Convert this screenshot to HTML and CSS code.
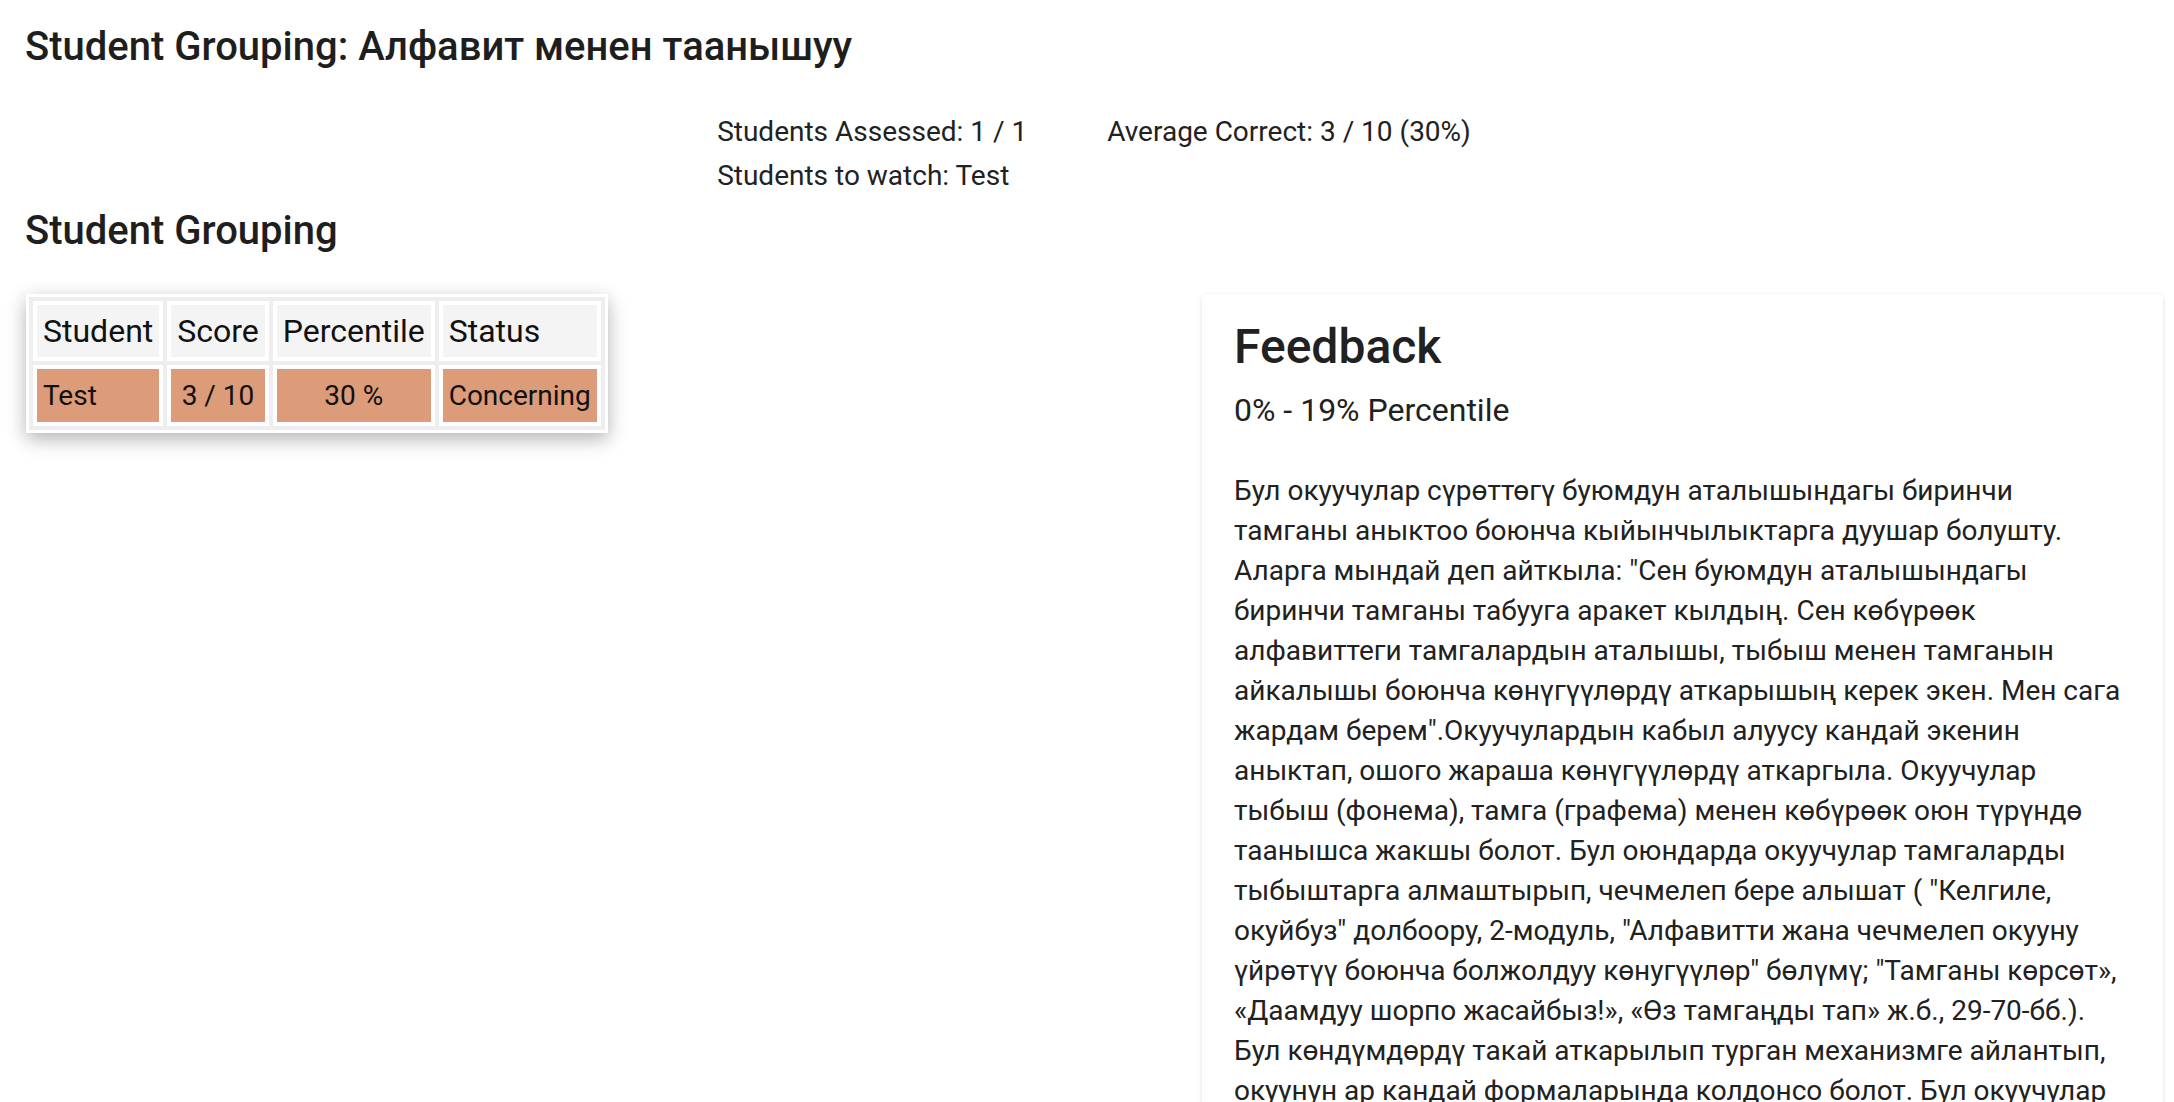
FILE: index.html
```html
<!DOCTYPE html>
<html lang="ky">
<head>
<meta charset="utf-8">
<title>Student Grouping</title>
<link rel="stylesheet" href="styles.css">
</head>
<body>
<h1 class="page-title">Student Grouping: Алфавит менен таанышуу</h1>

<div class="stats">
  <div class="stat">Students Assessed: 1 / 1</div>
  <div class="stat">Average Correct: 3 / 10 (30%)</div>
  <div class="stat">Students to watch: Test</div>
</div>

<h2 class="section-title">Student Grouping</h2>

<div class="content">
  <div class="table-col">
    <table class="grouping">
      <thead>
        <tr>
          <th>Student</th>
          <th>Score</th>
          <th>Percentile</th>
          <th>Status</th>
        </tr>
      </thead>
      <tbody>
        <tr class="concerning">
          <td>Test</td>
          <td class="center">3 / 10</td>
          <td class="center">30 %</td>
          <td>Concerning</td>
        </tr>
      </tbody>
    </table>
  </div>

  <div class="card">
    <h3 class="card-title">Feedback</h3>
    <div class="card-subtitle">0% - 19% Percentile</div>
    <p class="card-text">Бул окуучулар сүрөттөгү буюмдун аталышындагы биринчи тамганы аныктоо боюнча кыйынчылыктарга дуушар болушту. Аларга мындай деп айткыла: "Сен буюмдун аталышындагы биринчи тамганы табууга аракет кылдың. Сен көбүрөөк алфавиттеги тамгалардын аталышы, тыбыш менен тамганын айкалышы боюнча көнүгүүлөрдү аткарышың керек экен. Мен сага жардам берем".Окуучулардын кабыл алуусу кандай экенин аныктап, ошого жараша көнүгүүлөрдү аткаргыла. Окуучулар тыбыш (фонема), тамга (графема) менен көбүрөөк оюн түрүндө таанышса жакшы болот. Бул оюндарда окуучулар тамгаларды тыбыштарга алмаштырып, чечмелеп бере алышат ( "Келгиле, окуйбуз" долбоору, 2-модуль, "Алфавитти жана чечмелеп окууну үйрөтүү боюнча болжолдуу көнугүүлөр" бөлүмү; "Тамганы көрсөт», «Даамдуу шорпо жасайбыз!», «Өз тамгаңды тап» ж.б., 29-70-бб.). Бул көндүмдөрдү такай аткарылып турган механизмге айлантып, окуунун ар кандай формаларында колдонсо болот. Бул окуучулар</p>
  </div>
</div>
</body>
</html>
```

FILE: styles.css
```css
html, body {
  margin: 0;
  padding: 0;
  background: #ffffff;
}

body {
  font-family: Roboto, "Noto Sans", "DejaVu Sans", sans-serif;
  color: #212121;
  padding: 0 11px 0 25px;
}

.page-title {
  margin: 23px 0 0 0;
  font-size: 40px;
  font-weight: 500;
  line-height: 47px;
  color: #1e1e1e;
}

.stats {
  display: grid;
  grid-template-columns: 390px auto;
  justify-content: center;
  margin-top: 40px;
  font-size: 28px;
  line-height: 44px;
  color: #222;
}

.section-title {
  margin: 9px 0 0 0;
  font-size: 40px;
  font-weight: 500;
  line-height: 47px;
  color: #1e1e1e;
}

.content {
  display: grid;
  grid-template-columns: 1fr 961px;
  align-items: start;
  margin-top: 40px;
}

.table-col {
  padding-left: 1px;
}

.grouping {
  border-collapse: separate;
  border-spacing: 4px;
  background: #eeeeee;
  border: 3px solid #ffffff;
  box-shadow: 0 6px 18px rgba(0, 0, 0, 0.3);
  color: #111;
}

.grouping th {
  background: #f4f4f4;
  border: 4px solid #ffffff;
  font-size: 32px;
  font-weight: 400;
  line-height: 38px;
  padding: 7px 6px;
  text-align: left;
}

.grouping td {
  border: 4px solid #ffffff;
  font-size: 28px;
  line-height: 33px;
  padding: 10px 6px 10px 6px;
  text-align: left;
}

.grouping .concerning td {
  background: #dc9b79;
}

.grouping td.center {
  text-align: center;
}

.card {
  background: #ffffff;
  border-radius: 5px;
  box-shadow: 0 1px 4px rgba(0, 0, 0, 0.14);
  padding: 25px 32px 40px 32px;
}

.card-title {
  margin: 0;
  font-size: 48px;
  font-weight: 500;
  line-height: 56px;
  color: #212121;
}

.card-subtitle {
  margin-top: 16px;
  font-size: 32px;
  line-height: 38px;
  color: #212121;
}

.card-text {
  margin: 42px 0 0 0;
  font-size: 28px;
  line-height: 40px;
  color: #212121;
}
```
